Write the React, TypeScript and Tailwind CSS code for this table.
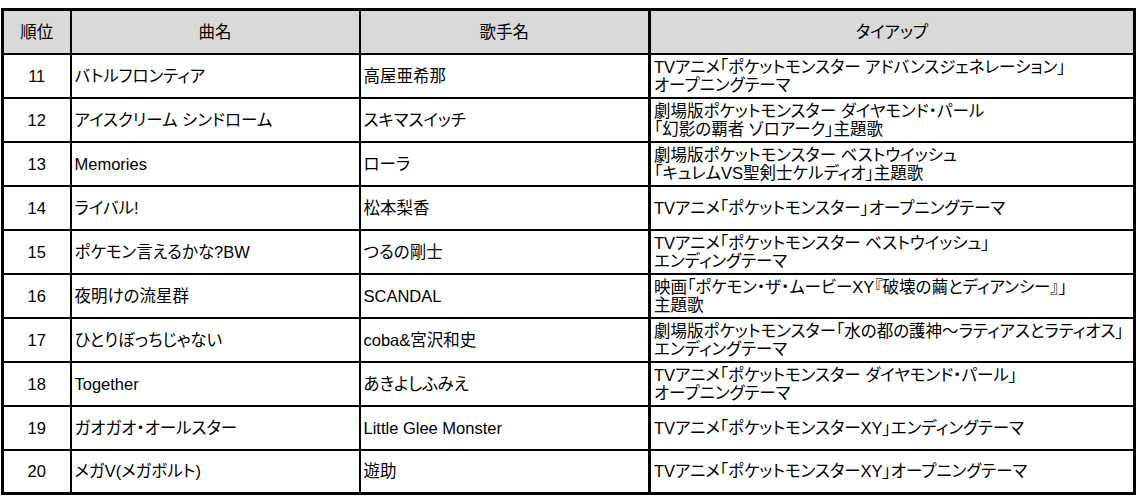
import React from "react";

interface Song {
  rank: number;
  title: string;
  artist: string;
  tieup: string[];
}

const songs: Song[] = [
  { rank: 11, title: "バトルフロンティア", artist: "高屋亜希那", tieup: ["TVアニメ「ポケットモンスター アドバンスジェネレーション」", "オープニングテーマ"] },
  { rank: 12, title: "アイスクリーム シンドローム", artist: "スキマスイッチ", tieup: ["劇場版ポケットモンスター ダイヤモンド・パール", "「幻影の覇者 ゾロアーク」主題歌"] },
  { rank: 13, title: "Memories", artist: "ローラ", tieup: ["劇場版ポケットモンスター ベストウイッシュ", "「キュレムVS聖剣士ケルディオ」主題歌"] },
  { rank: 14, title: "ライバル!", artist: "松本梨香", tieup: ["TVアニメ「ポケットモンスター」オープニングテーマ"] },
  { rank: 15, title: "ポケモン言えるかな?BW", artist: "つるの剛士", tieup: ["TVアニメ「ポケットモンスター ベストウイッシュ」", "エンディングテーマ"] },
  { rank: 16, title: "夜明けの流星群", artist: "SCANDAL", tieup: ["映画「ポケモン・ザ・ムービーXY『破壊の繭とディアンシー』」", "主題歌"] },
  { rank: 17, title: "ひとりぼっちじゃない", artist: "coba&宮沢和史", tieup: ["劇場版ポケットモンスター「水の都の護神～ラティアスとラティオス」", "エンディングテーマ"] },
  { rank: 18, title: "Together", artist: "あきよしふみえ", tieup: ["TVアニメ「ポケットモンスター ダイヤモンド・パール」", "オープニングテーマ"] },
  { rank: 19, title: "ガオガオ・オールスター", artist: "Little Glee Monster", tieup: ["TVアニメ「ポケットモンスターXY」エンディングテーマ"] },
  { rank: 20, title: "メガV(メガボルト)", artist: "遊助", tieup: ["TVアニメ「ポケットモンスターXY」オープニングテーマ"] },
];

const font = {
  fontFamily: '"Liberation Sans", "Noto Sans CJK JP", sans-serif',
  fontFeatureSettings: '"palt"',
};

export default function App() {
  return (
    <div className="w-[1138px] h-[500px] bg-white pt-[8px] pl-[1px]" style={font}>
      <table className="table-fixed border-collapse border-[3px] border-black text-[16.5px] leading-[18px] text-black w-[1134px]">
        <colgroup>
          <col className="w-[68px]" />
          <col className="w-[289px]" />
          <col className="w-[290px]" />
          <col className="w-[485px]" />
        </colgroup>
        <thead>
          <tr className="h-[44px] bg-[#d9d9d9]">
            <th className="border-2 border-black font-normal text-center">順位</th>
            <th className="border-2 border-black font-normal text-center">曲名</th>
            <th className="border-2 border-black font-normal text-center">歌手名</th>
            <th className="border-2 border-l-[3px] border-black font-normal text-center">タイアップ</th>
          </tr>
        </thead>
        <tbody>
          {songs.map((s) => (
            <tr key={s.rank} className="h-[44px]">
              <td className="border-2 border-black text-center">{s.rank}</td>
              <td className="border-2 border-black px-[3px]">{s.title}</td>
              <td className="border-2 border-black px-[3px]">{s.artist}</td>
              <td className="border-2 border-l-[3px] border-black px-[3px]">
                {s.tieup.map((line, i) => (
                  <div key={i}>{line}</div>
                ))}
              </td>
            </tr>
          ))}
        </tbody>
      </table>
    </div>
  );
}
